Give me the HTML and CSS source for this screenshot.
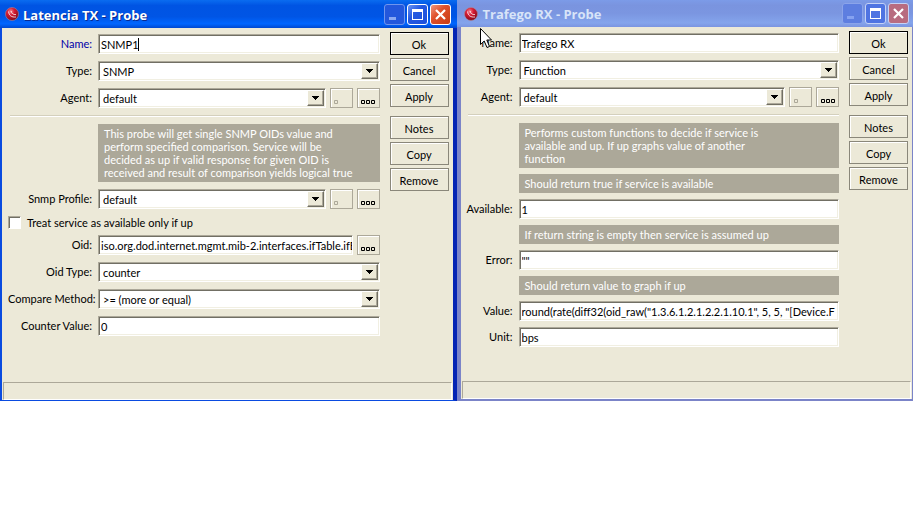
FILE: index.html
```html
<!DOCTYPE html>
<html lang="en">
  <head>
    <meta charset="UTF-8" />
    <meta name="viewport" content="width=device-width, initial-scale=1.0" />
    <title>Probes</title>
    <link rel="stylesheet" href="styles.css">
  </head>
  <body>
    <!-- Shared icons -->
    <svg class="icon-defs" aria-hidden="true">
      <defs>
        <radialGradient id="orbFill" cx="0.4" cy="0.3" r="0.7">
          <stop offset="0" stop-color="#f58a94" />
          <stop offset="0.4" stop-color="#d81c34" />
          <stop offset="1" stop-color="#800818" />
        </radialGradient>
      </defs>
      <symbol id="orb" viewBox="0 0 14 14">
        <circle cx="7" cy="7" r="6.5" fill="url(#orbFill)" stroke="#b08a98" stroke-width="0.6" />
        <path d="M3.500 4.500C4 8.500 6.500 10.500 11 10M6.200 4C6.500 6.500 8.200 7.800 11 7.600" fill="none" stroke="#fff" stroke-width="0.9" opacity="0.85" />
      </symbol>
      <symbol id="arrow" viewBox="0 0 7 4">
        <path d="M0 0h7v1H0zM1 1h5v1H1zM2 2h3v1H2zM3 3h1v1H3z" />
      </symbol>
      <symbol id="dots" viewBox="0 0 14 4">
        <path d="M0.500 0.500h3v3h-3zM5.500 0.500h3v3h-3zM10.500 0.500h3v3h-3z" fill="none" stroke="currentColor" />
      </symbol>
      <symbol id="dot" viewBox="0 0 14 4">
        <path d="M0.500 0.500h3v3h-3z" fill="none" stroke="currentColor" />
      </symbol>
      <symbol id="minimize" viewBox="0 0 19 19">
        <path d="M4 12h7v3H4z" fill="currentColor" />
      </symbol>
      <symbol id="maximize" viewBox="0 0 19 19">
        <path d="M4 4h11v11H4zM5 7v7h9V7z" fill="currentColor" fill-rule="evenodd" />
      </symbol>
      <symbol id="close" viewBox="0 0 19 19">
        <path d="M5 5l9 9M14 5l-9 9" fill="none" stroke="currentColor" stroke-width="2.200" />
      </symbol>
    </svg>

    <main class="desktop">
      <!-- Active window -->
      <section class="window">
        <header class="titlebar">
          <svg class="orb"><use href="#orb" /></svg>
          <h1>Latencia TX - Probe</h1>
          <button class="control min" aria-label="Minimize"><svg><use href="#minimize" /></svg></button>
          <button class="control" aria-label="Maximize"><svg><use href="#maximize" /></svg></button>
          <button class="control close" aria-label="Close"><svg><use href="#close" /></svg></button>
        </header>
        <div class="window-body">
          <div class="content">
            <form class="form">
              <div class="row">
                <label class="changed" for="txName">Name:</label>
                <div class="field">
                  <input type="text" id="txName" value="SNMP1" />
                  <span class="caret"></span>
                </div>
              </div>
              <div class="row">
                <label for="txType">Type:</label>
                <div class="field">
                  <select id="txType"><option>SNMP</option></select>
                  <span class="arrow"><svg><use href="#arrow" /></svg></span>
                </div>
              </div>
              <div class="row">
                <label for="txAgent">Agent:</label>
                <div class="field">
                  <select id="txAgent"><option>default</option></select>
                  <span class="arrow"><svg><use href="#arrow" /></svg></span>
                </div>
                <button type="button" class="small" aria-label="Open agent" disabled><svg><use href="#dot" /></svg></button>
                <button type="button" class="small" aria-label="Agents"><svg><use href="#dots" /></svg></button>
              </div>
              <hr />
              <p class="note">This probe will get single SNMP OIDs value and<br />perform specified comparison. Service will be<br />decided as up if valid response for given OID is<br />received and result of comparison yields logical true</p>
              <div class="row">
                <label for="txProfile">Snmp Profile:</label>
                <div class="field">
                  <select id="txProfile"><option>default</option></select>
                  <span class="arrow"><svg><use href="#arrow" /></svg></span>
                </div>
                <button type="button" class="small" aria-label="Open profile" disabled><svg><use href="#dot" /></svg></button>
                <button type="button" class="small" aria-label="Profiles"><svg><use href="#dots" /></svg></button>
              </div>
              <div class="check">
                <input type="checkbox" id="txTreat" />
                <label for="txTreat">Treat service as available only if up</label>
              </div>
              <div class="row">
                <label for="txOid">Oid:</label>
                <div class="field">
                  <input type="text" id="txOid" value="iso.org.dod.internet.mgmt.mib-2.interfaces.ifTable.ifE" />
                </div>
                <button type="button" class="small" aria-label="Browse oid"><svg><use href="#dots" /></svg></button>
              </div>
              <div class="row">
                <label for="txOidType">Oid Type:</label>
                <div class="field">
                  <select id="txOidType"><option>counter</option></select>
                  <span class="arrow"><svg><use href="#arrow" /></svg></span>
                </div>
              </div>
              <div class="row">
                <label for="txCompare">Compare Method:</label>
                <div class="field">
                  <select id="txCompare"><option>&gt;= (more or equal)</option></select>
                  <span class="arrow"><svg><use href="#arrow" /></svg></span>
                </div>
              </div>
              <div class="row">
                <label for="txCounter">Counter Value:</label>
                <div class="field">
                  <input type="text" id="txCounter" value="0" />
                </div>
              </div>
            </form>
            <div class="actions">
              <button class="default">Ok</button>
              <button>Cancel</button>
              <button>Apply</button>
              <button class="group">Notes</button>
              <button>Copy</button>
              <button>Remove</button>
            </div>
          </div>
          <footer class="status"></footer>
        </div>
      </section>

      <!-- Inactive window -->
      <section class="window inactive">
        <header class="titlebar">
          <svg class="orb"><use href="#orb" /></svg>
          <h1>Trafego RX - Probe</h1>
          <button class="control min" aria-label="Minimize"><svg><use href="#minimize" /></svg></button>
          <button class="control" aria-label="Maximize"><svg><use href="#maximize" /></svg></button>
          <button class="control close" aria-label="Close"><svg><use href="#close" /></svg></button>
        </header>
        <div class="window-body">
          <div class="content">
            <form class="form">
              <div class="row">
                <label for="rxName">Name:</label>
                <div class="field">
                  <input type="text" id="rxName" value="Trafego RX" />
                </div>
              </div>
              <div class="row">
                <label for="rxType">Type:</label>
                <div class="field">
                  <select id="rxType"><option>Function</option></select>
                  <span class="arrow"><svg><use href="#arrow" /></svg></span>
                </div>
              </div>
              <div class="row">
                <label for="rxAgent">Agent:</label>
                <div class="field">
                  <select id="rxAgent"><option>default</option></select>
                  <span class="arrow"><svg><use href="#arrow" /></svg></span>
                </div>
                <button type="button" class="small" aria-label="Open agent" disabled><svg><use href="#dot" /></svg></button>
                <button type="button" class="small" aria-label="Agents"><svg><use href="#dots" /></svg></button>
              </div>
              <hr />
              <div class="functions">
                <p class="note">Performs custom functions to decide if service is<br />available and up. If up graphs value of another<br />function</p>
                <p class="note">Should return true if service is available</p>
                <div class="row">
                  <label for="rxAvailable">Available:</label>
                  <div class="field">
                    <input type="text" id="rxAvailable" value="1" />
                  </div>
                </div>
                <p class="note">If return string is empty then service is assumed up</p>
                <div class="row">
                  <label for="rxError">Error:</label>
                  <div class="field">
                    <input type="text" id="rxError" value="&quot;&quot;" />
                  </div>
                </div>
                <p class="note">Should return value to graph if up</p>
                <div class="row">
                  <label for="rxValue">Value:</label>
                  <div class="field">
                    <input type="text" id="rxValue" value="round(rate(diff32(oid_raw(&quot;1.3.6.1.2.1.2.2.1.10.1&quot;, 5, 5, &quot;[Device.F" />
                  </div>
                </div>
                <div class="row">
                  <label for="rxUnit">Unit:</label>
                  <div class="field">
                    <input type="text" id="rxUnit" value="bps" />
                  </div>
                </div>
              </div>
            </form>
            <div class="actions">
              <button class="default">Ok</button>
              <button>Cancel</button>
              <button>Apply</button>
              <button class="group">Notes</button>
              <button>Copy</button>
              <button>Remove</button>
            </div>
          </div>
          <footer class="status"></footer>
        </div>
        <svg class="pointer" viewBox="0 0 12 21" aria-hidden="true">
          <path d="M0.500 0.500V16.500L4.200 13L7 19.500L9.500 18.500L6.800 12H11.500Z" fill="#fff" stroke="#000" />
        </svg>
      </section>
    </main>
  </body>
</html>
```

FILE: styles.css
```css
* {
  box-sizing: border-box;
}
body {
  margin: 0;
  background: #fff;
  font-family: Lato, "Liberation Sans", Arial, sans-serif;
  font-size: 11px;
  line-height: 13px;
  color: #000;
}
button,
input,
select {
  font: inherit;
  color: inherit;
  margin: 0;
  padding: 0;
}
.icon-defs {
  position: absolute;
  width: 0;
  height: 0;
}
.desktop {
  display: grid;
  grid-template-columns: 1fr 1fr;
}
.window {
  display: flex;
  flex-direction: column;
  position: relative;
  min-width: 0;
}

/* Title bar */
.titlebar {
  display: flex;
  align-items: center;
  gap: 2px;
  height: 28px;
  padding: 0 6px 0 5px;
  background: linear-gradient(#0a6cf0, #0054e3 20%, #0055e5 60%, #0066ff 85%, #0048d0);
  color: #fff;
}
.titlebar .orb {
  width: 14px;
  height: 14px;
}
.titlebar h1 {
  flex: 1;
  margin: 0;
  padding-top: 2px;
  padding-left: 2px;
  font-family: "Open Sans", "Noto Sans", sans-serif;
  font-size: 13px;
  font-weight: 700;
  line-height: 16px;
  white-space: nowrap;
  text-shadow: 1px 1px 0 #0a2a90;
}
.control {
  width: 21px;
  height: 21px;
  border: 1px solid #fff;
  border-radius: 3px;
  background: linear-gradient(135deg, #6a94f4, #2458e0 40%, #1c50dc);
  color: #fff;
}
.control svg {
  display: block;
  width: 19px;
  height: 19px;
}
.control.min {
  border-color: #6f95ee;
  background: #2357dc;
  color: #8aa8f2;
}
.control.close {
  background: linear-gradient(135deg, #f09880, #e0512c 40%, #c83c14);
}

/* Window body */
.window-body {
  flex: 1;
  display: flex;
  flex-direction: column;
  background: #ece9d8;
  border: solid #0a4be0;
  border-width: 0 4px 1px 2px;
  border-right-color: #0424b4;
}
.content {
  display: flex;
  gap: 10px;
  padding: 6px 4px 46px 6px;
}
.form {
  flex: 1;
  min-width: 0;
  display: flex;
  flex-direction: column;
  gap: 7px;
}
.row {
  display: flex;
  gap: 4px;
  height: 20px;
}
.row label {
  width: 87px;
  padding-right: 3px;
  margin-right: -1px;
  line-height: 20px;
  text-align: right;
  white-space: nowrap;
}
.row .changed {
  color: #0000a8;
}
.field {
  flex: 1;
  min-width: 0;
  display: flex;
  position: relative;
  background: #fff;
  border: 1px solid;
  border-color: #aca899 #fff #fff #aca899;
  box-shadow: inset 1px 1px 0 #716f64, inset -1px -1px 0 #f1efe2;
}
.field input,
.field select {
  flex: 1;
  min-width: 0;
  border: 0;
  outline: 0;
  background: none;
  padding-left: 2px;
}
.field select {
  appearance: none;
  padding-left: 4px;
}
.field .arrow {
  display: flex;
  align-items: center;
  justify-content: center;
  width: 17px;
  margin: 1px;
  background: #ece9d8;
  border: 1px solid;
  border-color: #fff #716f64 #716f64 #fff;
  box-shadow: inset -1px -1px 0 #aca899;
  pointer-events: none;
}
.arrow svg {
  width: 7px;
  height: 4px;
}
.caret {
  position: absolute;
  top: 3px;
  left: 39px;
  width: 1px;
  height: 13px;
  background: #000;
}
hr {
  width: calc(100% - 2px);
  height: 2px;
  margin: 0 0 0 2px;
  border: 0;
  background: #fff;
  border-top: 1px solid #d4d0bd;
}
.note {
  margin: 0 0 0 90px;
  padding: 3px 6px;
  background: #aca899;
  color: #fff;
}
.check {
  display: flex;
  align-items: center;
  gap: 6px;
  height: 12px;
}
.check input {
  appearance: none;
  width: 13px;
  height: 13px;
  background: #fff;
  border: 1px solid;
  border-color: #aca899 #fff #fff #aca899;
  box-shadow: inset 1px 1px 0 #716f64;
}

/* Buttons */
.small,
.actions button {
  background: #ece9d8;
  border: 1px solid #8a877a;
  box-shadow: inset 1px 1px 0 #fff;
}
.small {
  display: flex;
  align-items: flex-end;
  justify-content: center;
  width: 23px;
  padding-bottom: 3px;
  border-color: #aca899;
}
.small svg {
  width: 14px;
  height: 4px;
}
.small:disabled {
  color: #aca899;
}
.actions {
  display: flex;
  flex-direction: column;
  gap: 3px;
  width: 59px;
  margin-top: -2px;
}
.actions button {
  height: 23px;
  padding-top: 2px;
}
.actions .default {
  border-color: #000;
}
.actions .group {
  margin-top: 6px;
}
.status {
  height: 18px;
  margin: auto 1px 0;
  border: 1px solid;
  border-color: #aca899 #fff #fff #aca899;
}

/* Inactive window */
.inactive .titlebar {
  height: 27px;
  padding: 0 4px 0 7px;
  background: linear-gradient(#7c9be8, #7a94df 20%, #7b96e1 50%, #84a4ec 85%, #7a94e0);
  color: #d8e4f8;
}
.inactive .titlebar h1 {
  padding-top: 0;
  padding-left: 3px;
  text-shadow: none;
}
.inactive .control {
  border-color: #c4d2f6;
  background: #4f74e2;
}
.inactive .control.min {
  border-color: #8ba4ea;
  background: #5d7ee0;
  color: #86a2f0;
}
.inactive .control.close {
  background: #b86c80;
}
.inactive .window-body {
  border-color: #7b84c8;
  border-width: 0 1px 2px 4px;
}
.inactive .content {
  padding-left: 5px;
  padding-bottom: 8px;
}
.inactive .row label {
  width: 50px;
}
.inactive .note {
  margin-left: 53px;
}
.functions {
  display: flex;
  flex-direction: column;
  gap: 6px;
}
.pointer {
  position: absolute;
  top: 28px;
  left: 23px;
  width: 12px;
  height: 21px;
}
```
